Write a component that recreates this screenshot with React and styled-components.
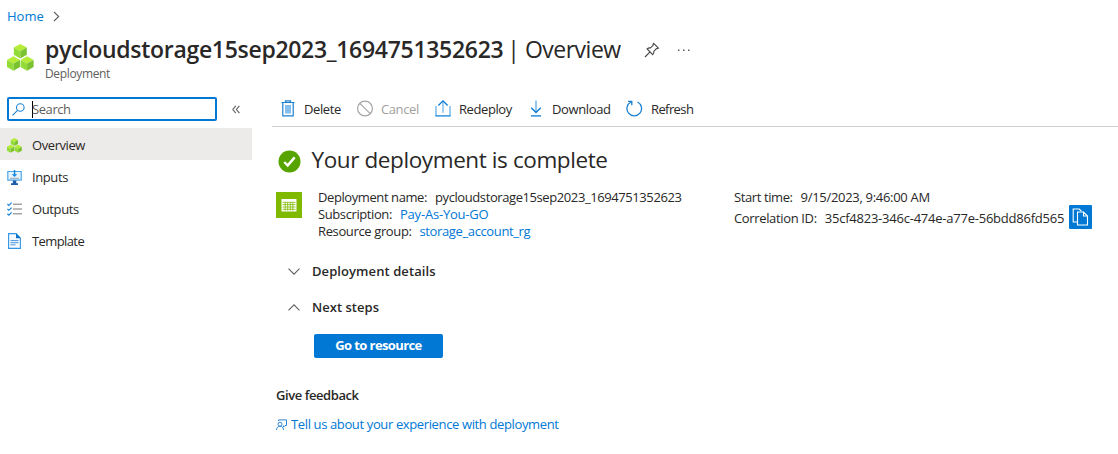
import React from 'react';
import styled, { createGlobalStyle } from 'styled-components';

const GlobalStyle = createGlobalStyle`
  * { box-sizing: border-box; }
  body {
    margin: 0;
    background: #fff;
    color: #292827;
    font: 13px/17px 'Open Sans', 'Noto Sans', sans-serif;
    overflow: hidden;
  }
  svg { display: block; flex: none; }
`;

const Text = styled.span`
  white-space: pre;
  letter-spacing: ${(p) => p.$ls || 0}px;
`;
const Link = styled(Text).attrs({ as: 'a' })`color: #0078d4;`;

const Page = styled.div`
  width: 1118px;
  height: 454px;
`;
const Breadcrumb = styled.nav`
  display: flex;
  align-items: center;
  gap: 9px;
  height: 32px;
  padding-left: 7px;
`;
const Header = styled.header`
  display: flex;
  height: 56px;
  padding: 12px 0 0 7px;
`;
const Titles = styled.div`
  flex: none;
  margin: -11px 0 0 11px;
  width: 591px;
`;
const Title = styled.h1`
  margin: 0;
  font-size: 23px;
  line-height: 32px;
  font-weight: 600;
  white-space: pre;
`;
const Light = styled(Text)`
  margin-left: -1.5px;
  font-weight: 400;
`;
const Subtitle = styled.div`
  margin-top: 1px;
  font-size: 12px;
  line-height: 16px;
  color: #605e5c;
`;
const HeaderActions = styled.div`
  display: flex;
  align-items: flex-start;
  gap: 17px;
  margin-top: -2px;
  padding: 0 0 0 8px;
`;
const Body = styled.div`display: flex;`;
const Sidebar = styled.aside`
  width: 252px;
  padding-top: 9px;
`;
const SearchRow = styled.div`
  display: flex;
  align-items: center;
  gap: 15px;
  padding-left: 7px;
`;
const SearchBox = styled.div`
  display: flex;
  align-items: center;
  width: 210px;
  height: 24px;
  padding-left: 3px;
  border: 2px solid #0078d4;
  border-radius: 2px;
  color: #605e5c;
`;
const Caret = styled.i`
  width: 1px;
  height: 17px;
  margin: 0 -1px 0 7px;
  background: #000;
`;
const Menu = styled.div`margin-top: 7px;`;
const MenuItem = styled.div`
  display: flex;
  align-items: center;
  gap: 10px;
  height: 32px;
  padding: 2px 0 0 7px;
  background: ${(p) => (p.$active ? '#edebe9' : 'transparent')};
`;
const Main = styled.main`
  flex: 1;
  padding-left: 20px;
`;
const Toolbar = styled.div`
  display: flex;
  height: 39px;
  padding: 1px 0 0 8px;
  border-bottom: 1px solid #d2d0ce;
`;
const Tool = styled.button`
  display: flex;
  align-items: center;
  gap: 8px;
  width: ${(p) => p.$w}px;
  padding: 3px 0 0;
  border: 0;
  background: none;
  font: inherit;
  color: ${(p) => (p.$disabled ? '#a19f9d' : 'inherit')};
`;
const ToolIcon = styled.span`margin-top: -2px;`;
const Content = styled.section`padding-left: 4px;`;
const StatusRow = styled.div`
  display: flex;
  align-items: center;
  gap: 11px;
  height: 36px;
  margin-top: 16px;
  padding-left: 1.5px;
`;
const StatusTitle = styled.h2`
  margin: -2px 0 0;
  font-size: 22.5px;
  line-height: 32px;
  font-weight: 400;
`;
const Summary = styled.div`
  display: flex;
  height: 64px;
  margin-top: 10px;
`;
const ResourceTile = styled.div`
  display: grid;
  place-items: center;
  width: 26px;
  height: 26px;
  margin: 3px 16px 0 0;
  background: #7fba00;
`;
const Fields = styled.div`
  display: flex;
  flex-direction: column;
  gap: ${(p) => p.$gap || 0}px;
  width: ${(p) => p.$w || 416}px;
`;
const Field = styled.div`
  display: flex;
  gap: 8px;
  height: 17px;
`;
const CopyButton = styled.button`
  display: grid;
  place-items: center;
  width: 23px;
  height: 24px;
  margin: -5px 0 0 -3px;
  padding: 0;
  border: 0;
  border-radius: 1px;
  background: #0078d4;
`;
const Expander = styled.div`
  display: flex;
  align-items: center;
  gap: 12px;
  height: 36px;
  padding-left: 12px;
  font-weight: 600;
`;
const Primary = styled.button`
  display: block;
  width: 129px;
  height: 24px;
  margin: 9px 0 0 38px;
  padding: 0 0 1px;
  border: 0;
  border-radius: 2px;
  background: #0078d4;
  color: #fff;
  font: inherit;
  font-weight: 700;
`;
const Feedback = styled.div`
  margin-top: 29px;
  font-weight: 600;
`;
const FeedbackLink = styled.div`
  display: flex;
  align-items: center;
  gap: 4px;
  margin-top: 12px;
`;

const Chevron = ({ d, w, h, color = '#605e5c' }) => (
  <svg width={w} height={h} viewBox={`0 0 ${w} ${h}`} fill="none" stroke={color} strokeWidth="1.1">
    <path d={d} />
  </svg>
);

const Cube = ({ x, y }) => (
  <g transform={`translate(${x} ${y})`}>
    <path d="M6.5 0 13 3.6 6.5 7.2 0 3.6Z" fill="#b4ec36" />
    <path d="M0 3.6 6.5 7.2V14.4L0 10.8Z" fill="#93dc38" />
    <path d="M13 3.6 6.5 7.2V14.4L13 10.8Z" fill="#7ac22f" />
  </g>
);
const Cubes = ({ size }) => (
  <svg width={size} height={size} viewBox="0 0 27 27">
    <Cube x={6.8} y={0} />
    <Cube x={0} y={12.3} />
    <Cube x={13.6} y={12.3} />
  </svg>
);
const Pin = () => (
  <svg width="16" height="16" viewBox="0 0 16 16" fill="none" stroke="#484644" strokeWidth="1.1">
    <path d="M9.7 1.4 14.4 6.1 13.2 6.7 12.4 6.6 9.8 9.3Q10.2 11.1 8.8 12.7L3.1 7Q4.7 5.6 6.5 6L9.1 3.4 9 2.5ZM6 9.9 1 15" />
  </svg>
);
const Dots = () => (
  <svg width="14" height="16" viewBox="0 0 14 16" fill="#605e5c">
    <path d="M1 7.5h1.5V9H1zM6 7.5h1.5V9H6zM11 7.5h1.5V9H11z" />
  </svg>
);
const Magnifier = () => (
  <svg width="13" height="13" viewBox="0 0 13 13" fill="none" stroke="#1b80d0" strokeWidth="1.1">
    <circle cx="8.3" cy="4.5" r="3.8" />
    <path d="M5.5 7.3.5 12.3" />
  </svg>
);
const InputsIcon = () => (
  <svg width="15" height="15" viewBox="0 0 15 15">
    <path d="M.8 1.5h13.4v8.7H.8z" fill="#e9f5fd" stroke="#4da6e8" strokeWidth="1.2" />
    <path d="M3 7.8h9v1H3z" fill="#92a5b1" />
    <path d="M6.8 0h1.5v4.3h2L7.5 7 4.8 4.3h2z" fill="#1688df" />
    <path d="M5.8 10.5h3.5v2.8H11V15H4v-1.7h1.8z" fill="#1c5ca9" />
  </svg>
);
const OutputsIcon = () => (
  <svg width="15" height="14" viewBox="0 0 15 14" fill="none">
    <path d="M6 2.2h9M6 7h9M6 11.7h9" stroke="#a5a5a8" strokeWidth="1.5" />
    <path d="m.4 2 1.5 1.4L4.6.7M.4 7l1.5 1.3 2.7-2.7M.4 11.8l1.5 1.3 2.7-2.7" stroke="#1684dc" strokeWidth="1.2" />
  </svg>
);
const TemplateIcon = () => (
  <svg width="15" height="16" viewBox="0 0 15 16">
    <path d="M1.6 .6h7.5l4.3 4.5v10.3H1.6z" fill="#f4faff" stroke="#3195e2" strokeWidth="1.1" />
    <path d="M9 .2 13.9 5.3H9z" fill="#0f74c9" />
    <path d="M3.5 7.6h8M3.5 9.7h8M3.5 11.8h5" stroke="#4b95dc" />
  </svg>
);
const Trash = () => (
  <svg width="16" height="17" viewBox="0 0 16 17" fill="none" stroke="#1b80d0" strokeWidth="1.2">
    <path d="M5 5h6v8.5H5z" fill="#83beec" stroke="none" />
    <path d="M1.5 2.5h13M5.5 2.3V.8h5v1.5M2.8 2.5v13.4h10.4V2.5" />
  </svg>
);
const Forbidden = () => (
  <svg width="16" height="17" viewBox="0 0 16 17" fill="none" stroke="#a6a5a4" strokeWidth="1.2">
    <circle cx="8" cy="8.5" r="7.4" />
    <path d="m2.8 3.3 10.4 10.4" />
  </svg>
);
const Upload = () => (
  <svg width="16" height="17" viewBox="0 0 16 17" fill="none">
    <path d="M1 6v9.5M15 6v9.5" stroke="#83beec" strokeWidth="1.6" />
    <path d="M.3 15.9h15.4" stroke="#0078d4" strokeWidth="1.2" />
    <path d="M8 1.5v11.3" stroke="#83beec" strokeWidth="1.5" />
    <path d="M3.4 5.5 8 .9l4.6 4.6" stroke="#0078d4" strokeWidth="1.2" />
  </svg>
);
const DownloadIcon = () => (
  <svg width="16" height="17" viewBox="0 0 16 17" fill="none">
    <path d="M8 .5v11.3" stroke="#83beec" strokeWidth="1.7" />
    <path d="M3.3 7.8 8 12.5l4.7-4.7M3 15.9h10" stroke="#0078d4" strokeWidth="1.3" />
  </svg>
);
const Refresh = () => (
  <svg width="17" height="17" viewBox="0 0 17 17" fill="none" stroke="#1b80d0" strokeWidth="1.3">
    <path d="M11.5 2A7.3 7.3 0 1 1 5 2M2 1.3h3.8v3.9" />
  </svg>
);
const Success = () => (
  <svg width="23" height="23" viewBox="0 0 23 23">
    <circle cx="11.5" cy="11.5" r="11" fill="#57a300" />
    <path d="m6.2 12 3.5 3.4 7-8" fill="none" stroke="#fff" strokeWidth="2.4" />
  </svg>
);
const Table = () => (
  <svg width="16" height="14" viewBox="0 0 16 14">
    <path d="M.5 1h15v12.5H.5z" fill="#fff" />
    <path d="M1.5 4.3h13M1.5 6.6h13M1.5 9h13M1.5 11.3h13M4.2 4v8.5M6.7 4v8.5M9.3 4v8.5M11.8 4v8.5" stroke="#7fba00" strokeWidth=".8" />
  </svg>
);
const Copy = () => (
  <svg width="17" height="18" viewBox="0 0 17 18" fill="none" stroke="#fff" strokeWidth="1.1">
    <path d="M5 14H1.2V1h6l2.2 2.2" />
    <path d="M5.5 4h6l4 4v9h-10zM11.5 4v4h4" fill="#0078d4" />
  </svg>
);
const Person = () => (
  <svg width="11" height="12" viewBox="0 0 11 12" fill="none" stroke="#2f86d2" strokeWidth="1">
    <path d="M2.5 2V.9h8v5.6H9L7.4 8.2V6.5" />
    <circle cx="4" cy="5.2" r="2" />
    <path d="M.5 11c0-5 7-5 7 0" />
  </svg>
);

const menu = [
  ['Overview', <Cubes size={15} />, -0.42],
  ['Inputs', <InputsIcon />, -0.4],
  ['Outputs', <OutputsIcon />, -0.38],
  ['Template', <TemplateIcon />, -0.6],
];
const tools = [
  ['Delete', <Trash />, 77, -0.4],
  ['Cancel', <Forbidden />, 78, -0.4],
  ['Redeploy', <Upload />, 93, -0.42],
  ['Download', <DownloadIcon />, 98, -0.36],
  ['Refresh', <Refresh />, 80, -0.6],
];

export default function App() {
  return (
    <Page>
      <GlobalStyle />
      <Breadcrumb>
        <Link $ls={0}>Home</Link>
        <Chevron w={7} h={11} d="M1 1l4.7 4.5L1 10" />
      </Breadcrumb>
      <Header>
        <Cubes size={27} />
        <Titles>
          <Title>
            <Text $ls={-0.3}>pycloudstorage15sep2023_1694751352623</Text>
            <Light $ls={-0.5}> | Overview</Light>
          </Title>
          <Subtitle><Text $ls={-0.35}>Deployment</Text></Subtitle>
        </Titles>
        <HeaderActions><Pin /><Dots /></HeaderActions>
      </Header>
      <Body>
        <Sidebar>
          <SearchRow>
            <SearchBox>
              <Magnifier />
              <Caret />
              <Text $ls={-0.42}>Search</Text>
            </SearchBox>
            <Chevron w={8} h={9} d="M3.8.8.8 4.5l3 3.7M7.4.8l-3 3.7 3 3.7" />
          </SearchRow>
          <Menu>
            {menu.map(([name, icon, ls], i) => (
              <MenuItem key={name} $active={i === 0}>{icon}<Text $ls={ls}>{name}</Text></MenuItem>
            ))}
          </Menu>
        </Sidebar>
        <Main>
          <Toolbar>
            {tools.map(([name, icon, w, ls]) => (
              <Tool key={name} $w={w} $disabled={name === 'Cancel'}>
                <ToolIcon>{icon}</ToolIcon>
                <Text $ls={ls}>{name}</Text>
              </Tool>
            ))}
          </Toolbar>
          <Content>
            <StatusRow>
              <Success />
              <StatusTitle><Text $ls={-0.4}>Your deployment is complete</Text></StatusTitle>
            </StatusRow>
            <Summary>
              <ResourceTile><Table /></ResourceTile>
              <Fields>
                <Field><Text $ls={-0.41}>Deployment name:</Text><Text $ls={-0.41}>pycloudstorage15sep2023_1694751352623</Text></Field>
                <Field><Text $ls={-0.4}>Subscription:</Text><Link $ls={-0.2}>Pay-As-You-GO</Link></Field>
                <Field><Text $ls={-0.37}>Resource group:</Text><Link $ls={-0.37}>storage_account_rg</Link></Field>
              </Fields>
              <Fields $gap={4} $w={380}>
                <Field><Text $ls={-0.4}>Start time:</Text><Text $ls={-0.3}>9/15/2023, 9:46:00 AM</Text></Field>
                <Field>
                  <Text $ls={-0.35}>Correlation ID:</Text>
                  <Text $ls={-0.23}>35cf4823-346c-474e-a77e-56bdd86fd565</Text>
                  <CopyButton><Copy /></CopyButton>
                </Field>
              </Fields>
            </Summary>
            <Expander>
              <Chevron w={12} h={7} d="M.5.7 6 6.2 11.5.7" />
              <Text $ls={0.08}>Deployment details</Text>
            </Expander>
            <Expander>
              <Chevron w={12} h={7} d="M.5 6.3 6 .8l5.5 5.5" />
              <Text $ls={0.03}>Next steps</Text>
            </Expander>
            <Primary><Text $ls={-0.6}>Go to resource</Text></Primary>
            <Feedback><Text $ls={-0.43}>Give feedback</Text></Feedback>
            <FeedbackLink><Person /><Link $ls={-0.37}>Tell us about your experience with deployment</Link></FeedbackLink>
          </Content>
        </Main>
      </Body>
    </Page>
  );
}
